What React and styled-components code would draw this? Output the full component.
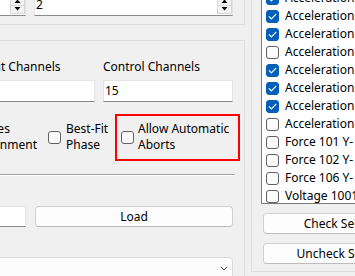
import React from 'react';
import styled, { createGlobalStyle } from 'styled-components';

const Global = createGlobalStyle`
  html, body { margin: 0; padding: 0; }
  body {
    background: #f0f0f0;
    font-family: "Noto Sans", "Segoe UI", sans-serif;
    font-size: 12px;
    color: #000;
    overflow: hidden;
  }
  * { box-sizing: border-box; }
`;

const Viewport = styled.div`
  width: 355px;
  height: 276px;
  overflow: hidden;
  background: #f0f0f0;
`;

const Window = styled.div`
  display: flex;
  align-items: flex-start;
  gap: 6px;
  width: 625px;
  margin-left: -184px;
  margin-top: -40px;
`;

const LeftColumn = styled.div`
  width: 429px;
  display: flex;
  flex-direction: column;
`;

const GroupBox = styled.div`
  border: 1px solid #dcdcdc;
  padding: ${(p) => p.$pad};
  margin-top: ${(p) => p.$mt || 0}px;
`;

const TwoCol = styled.div`
  display: grid;
  grid-template-columns: 1fr ${(p) => p.$right}px;
  column-gap: ${(p) => p.$gap}px;
  margin-top: ${(p) => p.$mt || 0}px;
`;

const Label = styled.div`
  line-height: 16px;
  white-space: nowrap;
`;

const FieldGrid = styled.div`
  display: grid;
  grid-template-columns: repeat(3, 130px);
  column-gap: 8px;
  row-gap: 5px;
`;

const TextBox = styled.div`
  height: ${(p) => p.$h || 22}px;
  background: #fff;
  border: 1px solid #e4e4e4;
  border-bottom-color: #8a8a8a;
  display: flex;
  align-items: center;
  padding-left: 1px;
  line-height: 16px;
`;

const Value = styled.span`
  flex: 1;
  white-space: nowrap;
`;

const SpinButtons = styled.div`
  width: 15px;
  align-self: stretch;
  margin: 1px 0 1px 0;
  display: flex;
  flex-direction: column;
`;

const SpinButton = styled.div`
  flex: 1;
  background: #f3f3f3;
  border: 1px solid #d6d6d6;
  display: flex;
  align-items: center;
  justify-content: center;
  & + & { border-top: none; }
`;

const CheckRow = styled.div`
  display: grid;
  grid-template-columns: 1fr 73px 112px;
  margin-top: 19px;
`;

const CheckItem = styled.div`
  display: flex;
  align-items: center;
  gap: ${(p) => p.$gap || 5}px;
  justify-self: ${(p) => p.$justify || 'start'};
  margin-right: ${(p) => p.$mr || 0}px;
  position: relative;
`;

const Highlight = styled(CheckItem)`
  &::after {
    content: '';
    position: absolute;
    left: -6px;
    right: -11px;
    top: -7px;
    bottom: -8px;
    border: 2px solid #f00;
    pointer-events: none;
  }
`;

const Box = styled.span`
  flex: none;
  width: 13px;
  height: 13px;
  border-radius: 3px;
  border: 1px solid ${(p) => (p.$checked ? '#005fb8' : '#616161')};
  background: ${(p) => (p.$checked ? '#005fb8' : '#fbfbfb')};
  display: flex;
  align-items: center;
  justify-content: center;
`;

const CheckText = styled.div`
  line-height: 16px;
  white-space: nowrap;
`;

const Separator = styled.div`
  height: 2px;
  border-top: 1px solid #a0a0a0;
  border-bottom: 1px solid #ffffff;
  margin-top: 21px;
  margin-right: -2px;
`;

const Button = styled.div`
  height: 21px;
  background: #fdfdfd;
  border: 1px solid #d0d0d0;
  border-bottom-color: #bcbcbc;
  border-radius: 4px;
  display: flex;
  align-items: center;
  justify-content: center;
  white-space: nowrap;
  line-height: 16px;
  margin: ${(p) => p.$m || '0'};
`;

const Combo = styled.div`
  height: 22px;
  margin-top: 30px;
  background: #fcfcfc;
  border: 1px solid #dadada;
  border-radius: 4px;
  display: flex;
  align-items: center;
  justify-content: flex-end;
  padding-right: 4px;
`;

const RightGroup = styled.div`
  width: 190px;
  border: 1px solid #dcdcdc;
  padding: 8px 9px 7px 9px;
`;

const ListBox = styled.div`
  height: 235px;
  background: #fff;
  border: 1px solid #7a7a7a;
  overflow: hidden;
  padding-top: 1px;
`;

const ListRow = styled.div`
  height: 18px;
  display: flex;
  align-items: center;
  gap: 6px;
  padding-left: 4px;
  white-space: nowrap;
  line-height: 16px;
`;

function Check({ checked }) {
  return (
    <Box $checked={checked}>
      {checked && (
        <svg width="11" height="11" viewBox="0 0 11 11">
          <path d="M2.2 5.7 L4.4 7.9 L8.8 3.3" stroke="#fff" strokeWidth="1.2" fill="none" strokeLinecap="round" strokeLinejoin="round" />
        </svg>
      )}
    </Box>
  );
}

function SpinBox({ value }) {
  return (
    <TextBox>
      <Value>{value}</Value>
      <SpinButtons>
        <SpinButton>
          <svg width="7" height="4" viewBox="0 0 7 4"><polygon points="0.5,4 3.5,0.5 6.5,4" fill="#000" /></svg>
        </SpinButton>
        <SpinButton>
          <svg width="7" height="4" viewBox="0 0 7 4"><polygon points="0.5,0 3.5,3.5 6.5,0" fill="#000" /></svg>
        </SpinButton>
      </SpinButtons>
    </TextBox>
  );
}

const channels = [
  ['Acceleration 1 X+', true],
  ['Acceleration 2 Y+', true],
  ['Acceleration 3 Z+', true],
  ['Acceleration 4 X+', true],
  ['Acceleration 5 Y+', false],
  ['Acceleration 6 Z+', true],
  ['Acceleration 7 X+', true],
  ['Acceleration 8 Y+', true],
  ['Acceleration 9 Z+', false],
  ['Force 101 Y-', false],
  ['Force 102 Y-', false],
  ['Force 106 Y-', false],
  ['Voltage 1001', false],
];

export default function App() {
  return (
    <>
      <Global />
      <Viewport>
        <Window>
          <LeftColumn>
            <GroupBox $pad="8px 11px 8px 10px">
              <TwoCol $right={199} $gap={8}>
                <Label>Averages</Label>
                <Label>Frames</Label>
              </TwoCol>
              <TwoCol $right={199} $gap={8} $mt={9}>
                <SpinBox value="4" />
                <SpinBox value="2" />
              </TwoCol>
            </GroupBox>

            <GroupBox $mt={15} $pad="18px 11px 40px 10px">
              <FieldGrid>
                <Label>Input Channels</Label>
                <Label>Output Channels</Label>
                <Label>Control Channels</Label>
                <TextBox><Value>16</Value></TextBox>
                <TextBox><Value></Value></TextBox>
                <TextBox><Value>15</Value></TextBox>
              </FieldGrid>

              <CheckRow>
                <CheckItem $justify="end" $mr={11}>
                  <Check checked={false} />
                  <CheckText>Phases<br />Assignment</CheckText>
                </CheckItem>
                <CheckItem>
                  <Check checked={false} />
                  <CheckText>Best-Fit<br />Phase</CheckText>
                </CheckItem>
                <Highlight $gap={4}>
                  <Check checked={false} />
                  <CheckText>Allow Automatic<br />Aborts</CheckText>
                </Highlight>
              </CheckRow>

              <Separator />

              <TwoCol $right={198} $gap={9} $mt={30}>
                <TextBox $h={21}><Value>profile.txt</Value></TextBox>
                <Button>Load</Button>
              </TwoCol>

              <Combo>
                <svg width="8" height="5" viewBox="0 0 8 5">
                  <path d="M0.8 0.8 L4 4 L7.2 0.8" stroke="#404040" strokeWidth="1" fill="none" />
                </svg>
              </Combo>
            </GroupBox>
          </LeftColumn>

          <RightGroup>
            <ListBox>
              {channels.map(([name, on]) => (
                <ListRow key={name}>
                  <Check checked={on} />
                  <span>{name}</span>
                </ListRow>
              ))}
            </ListBox>
            <Button $m="9px 2px 0 2px">Check Selected</Button>
            <Button $m="9px 2px 0 2px">Uncheck Selected</Button>
          </RightGroup>
        </Window>
      </Viewport>
    </>
  );
}
